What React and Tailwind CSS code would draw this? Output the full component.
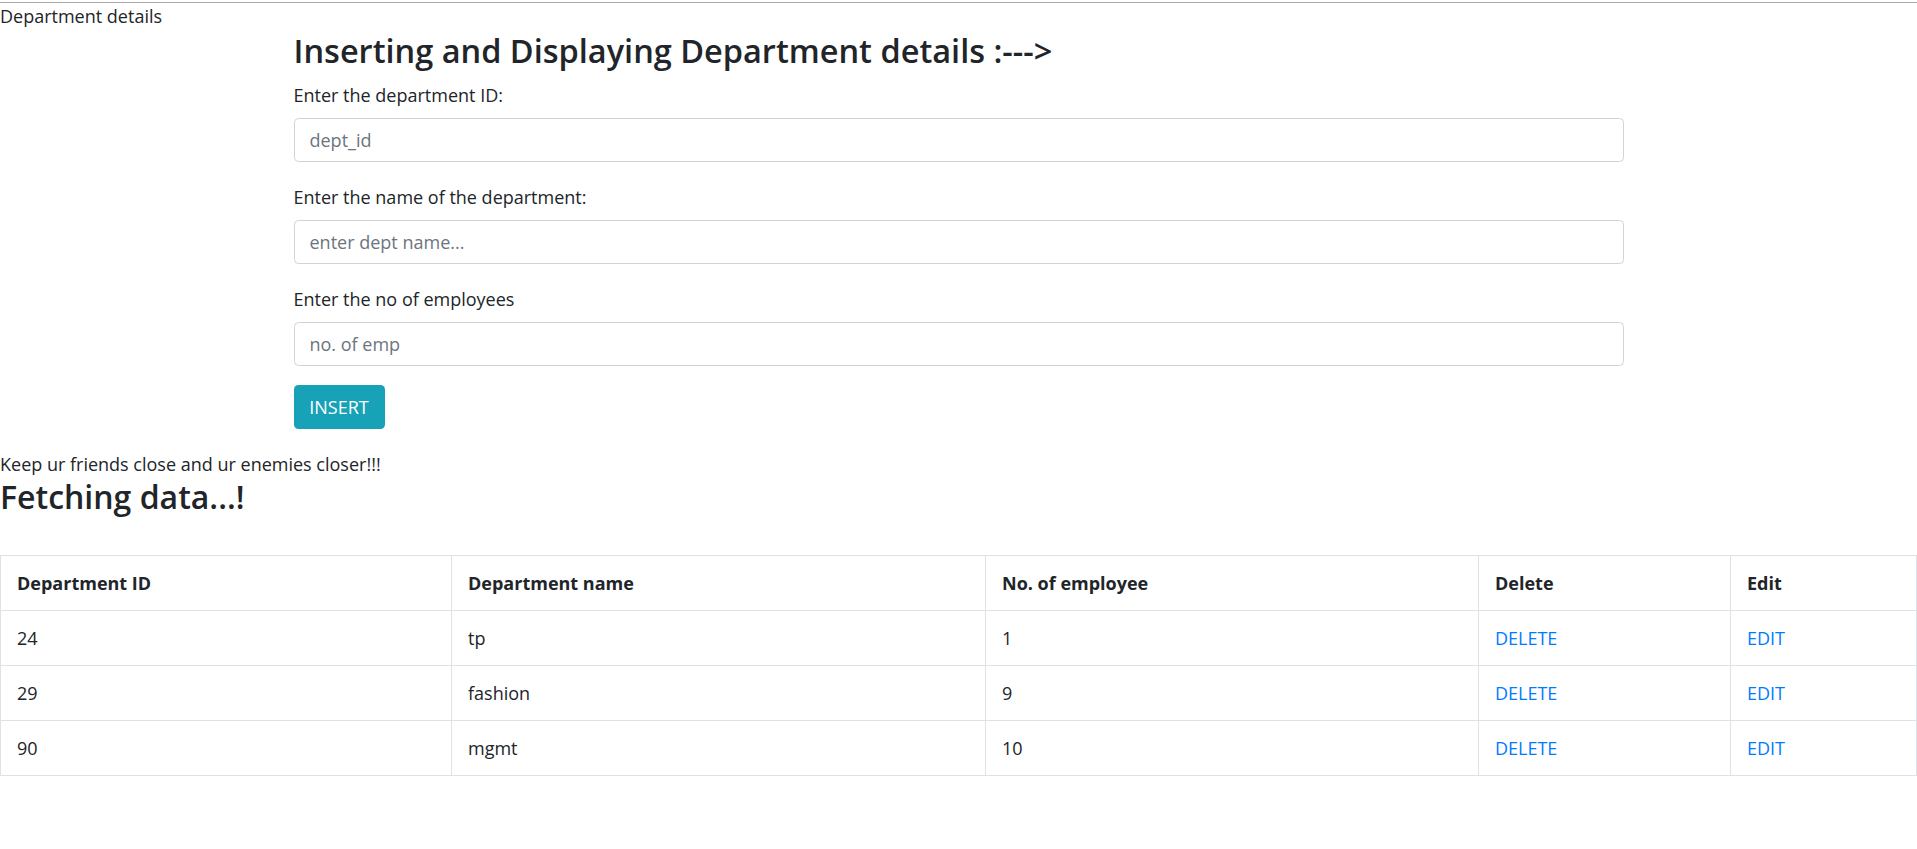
import React from "react";

const rows = [
  { id: 24, name: "tp", emp: 1 },
  { id: 29, name: "fashion", emp: 9 },
  { id: 90, name: "mgmt", emp: 10 },
];

function Field({ label, placeholder, last }) {
  return (
    <div className={last ? "mb-[19px]" : "mb-[22px]"}>
      <label className="block text-[18px] leading-[27px] mb-[9px]">{label}</label>
      <input
        type="text"
        placeholder={placeholder}
        className="block w-full h-[44px] px-[15px] border border-[#ced4da] rounded-[4.5px] text-[18px] text-[#495057] placeholder:text-[#6c757d] outline-none"
      />
    </div>
  );
}

export default function App() {
  return (
    <div
      className="min-h-screen bg-white text-[#212529]"
      style={{ fontFamily: '"Open Sans", "Liberation Sans", sans-serif' }}
    >
      <div className="h-px bg-[#aaaaaa] mt-[2px]" />
      <div className="text-[18px] leading-[27px]">Department details</div>

      <div className="mx-auto w-[1330px]">
        <h3 className="mt-[6px] text-[32.5px] leading-[30px] font-semibold mb-[16px]">
          Inserting and Displaying Department details :---&gt;
        </h3>
        <Field label="Enter the department ID:" placeholder="dept_id" />
        <Field label="Enter the name of the department:" placeholder="enter dept name..." />
        <Field label="Enter the no of employees" placeholder="no. of emp" last />
        <button className="h-[44px] w-[91px] bg-[#17a2b8] text-white text-[18px] rounded-[4.5px]">
          INSERT
        </button>
      </div>

      <p className="mt-[22px] text-[18px] leading-[27px]">Keep ur friends close and ur enemies closer!!!</p>
      <h3 className="text-[32px] leading-[38px] font-semibold mb-[39px]">Fetching data...!</h3>

      <table className="w-full border-collapse table-fixed text-[18px] leading-[27px]">
        <thead>
          <tr>
            <th className="w-[451px] border border-[#dee2e6] px-[16px] py-[13.5px] text-left font-bold">Department ID</th>
            <th className="w-[534px] border border-[#dee2e6] px-[16px] py-[13.5px] text-left font-bold">Department name</th>
            <th className="w-[493px] border border-[#dee2e6] px-[16px] py-[13.5px] text-left font-bold">No. of employee</th>
            <th className="w-[252px] border border-[#dee2e6] px-[16px] py-[13.5px] text-left font-bold">Delete</th>
            <th className="border border-[#dee2e6] px-[16px] py-[13.5px] text-left font-bold">Edit</th>
          </tr>
        </thead>
        <tbody>
          {rows.map((r) => (
            <tr key={r.id}>
              <td className="border border-[#dee2e6] px-[16px] py-[13.5px]">{r.id}</td>
              <td className="border border-[#dee2e6] px-[16px] py-[13.5px]">{r.name}</td>
              <td className="border border-[#dee2e6] px-[16px] py-[13.5px]">{r.emp}</td>
              <td className="border border-[#dee2e6] px-[16px] py-[13.5px]">
                <a href="#" className="text-[#007bff]">DELETE</a>
              </td>
              <td className="border border-[#dee2e6] px-[16px] py-[13.5px]">
                <a href="#" className="text-[#007bff]">EDIT</a>
              </td>
            </tr>
          ))}
        </tbody>
      </table>
    </div>
  );
}
